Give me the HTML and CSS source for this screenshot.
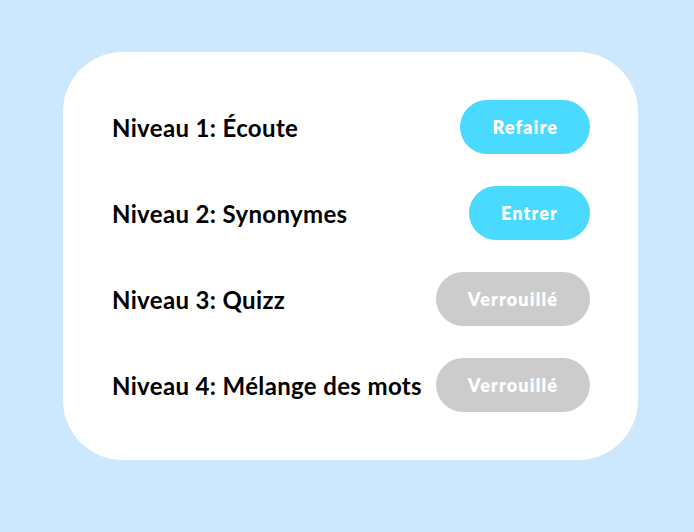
FILE: index.html
```html
<!DOCTYPE html>
<html lang="fr">
<head>
<meta charset="utf-8">
<link rel="stylesheet" href="styles.css">
</head>
<body>
<div class="card">
  <div class="row"><span class="label">Niveau 1: Écoute</span><button class="btn active">Refaire</button></div>
  <div class="row"><span class="label">Niveau 2: Synonymes</span><button class="btn active">Entrer</button></div>
  <div class="row"><span class="label">Niveau 3: Quizz</span><button class="btn locked">Verrouillé</button></div>
  <div class="row"><span class="label">Niveau 4: Mélange des mots</span><button class="btn locked">Verrouillé</button></div>
</div>
</body>
</html>
```
FILE: styles.css
```css
html, body { margin: 0; padding: 0; }
body {
  background: #cce8ff;
  width: 694px;
  height: 532px;
  padding: 52px 0 0 63px;
  box-sizing: border-box;
  font-family: "Lato", "Noto Sans", sans-serif;
}
.card {
  width: 575px;
  height: 408px;
  box-sizing: border-box;
  background: #ffffff;
  border-radius: 60px;
  padding: 48px 48px 48px 49px;
  display: flex;
  flex-direction: column;
  gap: 32px;
}
.row {
  display: flex;
  align-items: center;
  justify-content: space-between;
  height: 54px;
}
.label {
  font-size: 24px;
  font-weight: 700;
  letter-spacing: 0.35px;
  color: #000;
}
.btn {
  border: none;
  height: 54px;
  padding: 0 32px;
  border-radius: 27px;
  font-family: inherit;
  font-size: 18px;
  font-weight: 800;
  letter-spacing: 1.1px;
  color: #fff;
}
.active { background: #4ad9ff; }
.locked { background: #cccccc; }
```
